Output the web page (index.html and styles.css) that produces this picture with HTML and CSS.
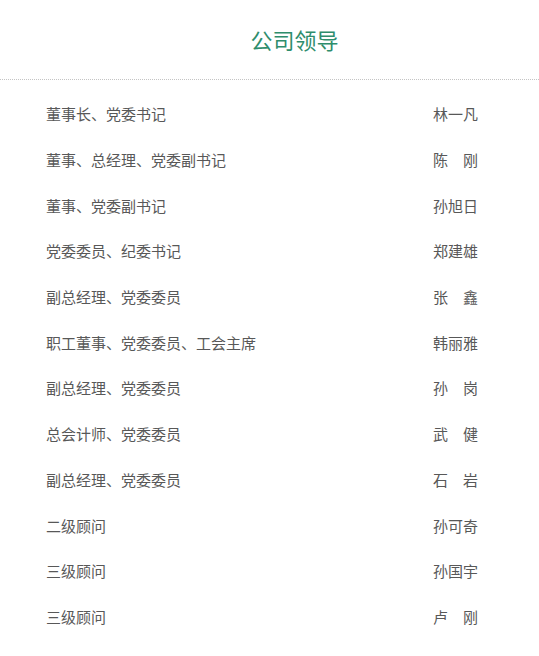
FILE: index.html
```html
<!DOCTYPE html>
<html lang="zh-CN">
<head>
<meta charset="utf-8">
<title>公司领导</title>
<link rel="stylesheet" href="styles.css">
</head>
<body>
<div class="page">
  <h1 class="title">公司领导</h1>
  <ul class="list">
    <li class="row"><span class="post">董事长、党委书记</span><span class="name">林一凡</span></li>
    <li class="row"><span class="post">董事、总经理、党委副书记</span><span class="name">陈　刚</span></li>
    <li class="row"><span class="post">董事、党委副书记</span><span class="name">孙旭日</span></li>
    <li class="row"><span class="post">党委委员、纪委书记</span><span class="name">郑建雄</span></li>
    <li class="row"><span class="post">副总经理、党委委员</span><span class="name">张　鑫</span></li>
    <li class="row"><span class="post">职工董事、党委委员、工会主席</span><span class="name">韩丽雅</span></li>
    <li class="row"><span class="post">副总经理、党委委员</span><span class="name">孙　岗</span></li>
    <li class="row"><span class="post">总会计师、党委委员</span><span class="name">武　健</span></li>
    <li class="row"><span class="post">副总经理、党委委员</span><span class="name">石　岩</span></li>
    <li class="row"><span class="post">二级顾问</span><span class="name">孙可奇</span></li>
    <li class="row"><span class="post">三级顾问</span><span class="name">孙国宇</span></li>
    <li class="row"><span class="post">三级顾问</span><span class="name">卢　刚</span></li>
  </ul>
</div>
</body>
</html>
```

FILE: styles.css
```css
html, body {
  margin: 0;
  padding: 0;
  background: #fff;
}
body {
  font-family: "Noto Sans CJK SC", "Liberation Sans", sans-serif;
}
.page {
  width: 539px;
}
.title {
  margin: 0;
  padding: 22px 0 23px 50px;
  height: 34px;
  line-height: 34px;
  text-align: center;
  font-size: 22px;
  font-weight: normal;
  color: #2e8d6c;
  border-bottom: 1px dotted #c4c4c4;
}
.list {
  list-style: none;
  margin: 0;
  padding: 11px 61px 0 46px;
}
.row {
  display: flex;
  justify-content: space-between;
  align-items: center;
  height: 45.7px;
  font-size: 15px;
  color: #585858;
}
```
